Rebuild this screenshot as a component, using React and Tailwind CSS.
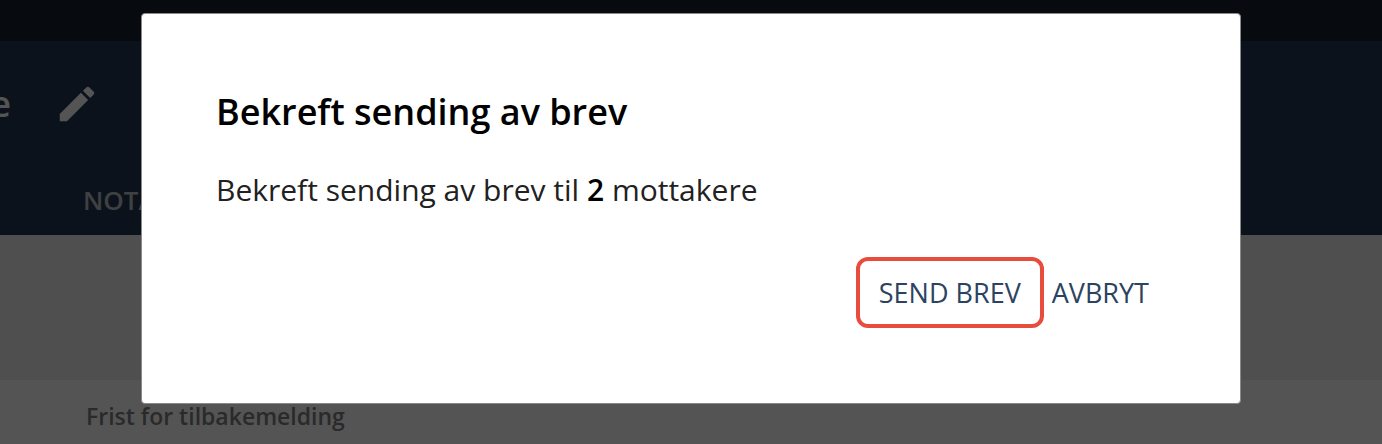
import { useState } from 'react';

function PencilIcon() {
  return (
    <svg viewBox="0 0 24 24" className="size-[46px]" fill="currentColor" aria-hidden="true">
      <path d="M3 17.25V21h3.75L17.81 9.94l-3.75-3.75L3 17.25zM20.71 7.04c.39-.39.39-1.02 0-1.41l-2.34-2.34c-.39-.39-1.02-.39-1.41 0l-1.83 1.83 3.75 3.75 1.83-1.83z" />
    </svg>
  );
}

function CasePage() {
  return (
    <div className="flex min-h-screen flex-col overflow-hidden bg-white">
      <div className="h-[41px] bg-[#182433]" />
      <header className="flex h-[194px] flex-col bg-[#243954]">
        <div className="flex h-[125px] items-center gap-[43px]">
          <span className="flex w-[11px] justify-end text-4xl font-semibold text-white">e</span>
          <button type="button" aria-label="Rediger" className="text-white">
            <PencilIcon />
          </button>
        </div>
        <nav className="flex pl-[83px]">
          <a href="#notater" className="text-[26px] leading-17 font-semibold text-[#c0c3c8]">
            NOTATER
          </a>
        </nav>
      </header>
      <div className="h-[145px] bg-[#f0f0f0]" />
      <div className="flex-1 px-[86px] pt-4">
        <p className="text-[23px] leading-10 font-semibold text-[#808080]">Frist for tilbakemelding</p>
      </div>
    </div>
  );
}

function ConfirmDialog({ recipients, onClose }) {
  return (
    <div className="fixed inset-0 flex items-start justify-center bg-black/67 px-8 pt-[13px]">
      <div
        role="dialog"
        aria-modal="true"
        aria-labelledby="confirm-title"
        className="w-full max-w-[1100px] rounded-sm border border-[#8a8a8a] bg-white px-[74px] pt-[73px] pb-[75px]"
      >
        <h2 id="confirm-title" className="text-4xl leading-[50px] font-semibold text-black">
          Bekreft sending av brev
        </h2>
        <p className="mt-[31px] text-[30px] leading-[44px] text-[#212121]">
          Bekreft sending av brev til <strong className="font-semibold text-black">{recipients}</strong> mottakere
        </p>
        <div className="mt-[45px] flex items-center justify-end gap-2 pr-[17px] text-[27px] leading-8 text-[#2b4361]">
          <button type="button" className="h-[71px] rounded-xl border-4 border-[#e74c3c] px-[19px]" onClick={onClose}>
            SEND BREV
          </button>
          <button type="button" onClick={onClose}>
            AVBRYT
          </button>
        </div>
      </div>
    </div>
  );
}

export default function App() {
  const [open, setOpen] = useState(true);

  return (
    <div className="font-['Open_Sans','Noto_Sans',sans-serif]">
      <CasePage />
      {open ? <ConfirmDialog recipients={2} onClose={() => setOpen(false)} /> : null}
    </div>
  );
}
